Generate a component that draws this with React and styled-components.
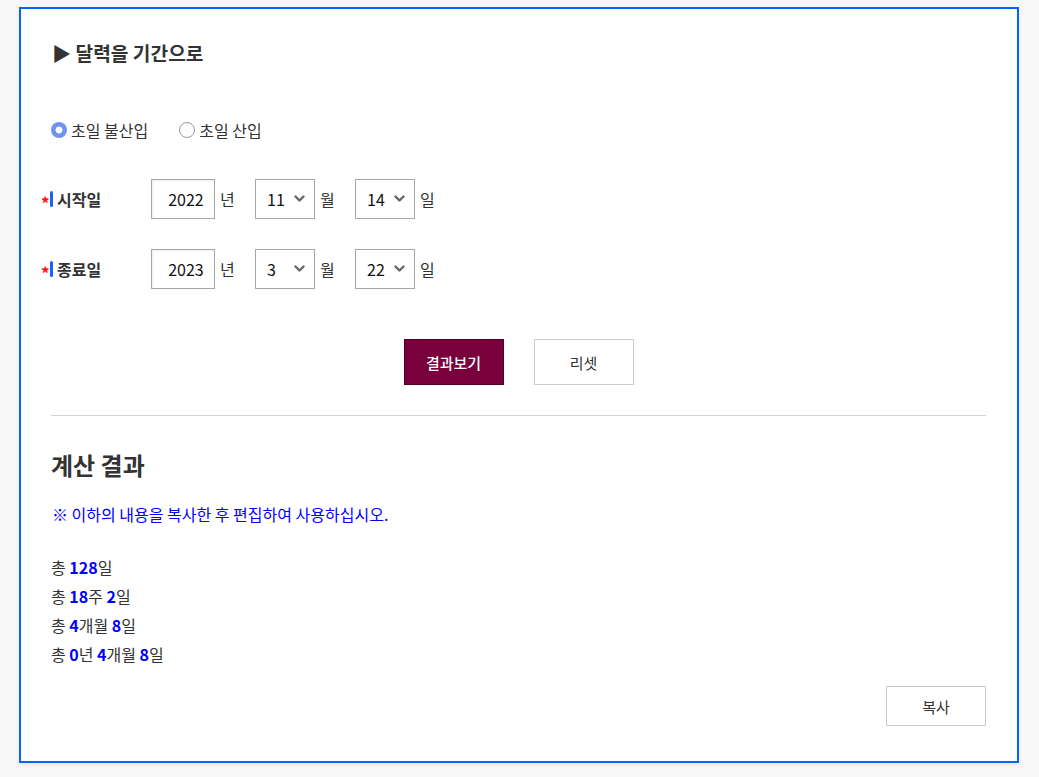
import React, { useState } from "react";
import styled, { createGlobalStyle } from "styled-components";

const Global = createGlobalStyle`
  html, body { margin: 0; padding: 0; background: #f8f8f8; }
  body { font-family: "Noto Sans CJK KR", "Noto Sans", sans-serif; color: #333; }
  * { box-sizing: border-box; }
`;

const Page = styled.div`
  padding: 7px 20px 14px 19px;
`;

const Box = styled.div`
  width: 1000px;
  height: 756px;
  border: 2px solid #0066ff;
  background: #fff;
  box-shadow: 0 2px 4px rgba(0,0,0,0.08);
  padding: 0 31px 0 30px;
  display: flex;
  flex-direction: column;
`;

const Title = styled.h2`
  margin: 31px 0 0 1px;
  font-size: 19.2px;
  line-height: 26px;
  font-weight: 700;
  color: #333;
`;

const RadioRow = styled.div`
  margin-top: 54px;
  height: 20px;
  display: flex;
  align-items: center;
  gap: 31px;
`;

const RadioLabel = styled.label`
  display: flex;
  align-items: center;
  gap: 4px;
  font-size: 16px;
  line-height: 20px;
  cursor: pointer;
`;

const RadioInput = styled.input`
  appearance: none;
  margin: 0;
  width: 16px;
  height: 16px;
  border-radius: 50%;
  border: 1px solid #9a9a9a;
  background: #fff;
  &:checked {
    border: none;
    background: radial-gradient(circle, #fff 0 3.2px, #6f94f0 3.8px);
  }
`;

const DateRow = styled.div`
  margin-top: ${(p) => p.$top}px;
  margin-left: -10px;
  height: 40px;
  display: flex;
  align-items: center;
`;

const FieldLabel = styled.div`
  width: 110px;
  display: flex;
  align-items: center;
  font-size: 16px;
  font-weight: 700;
  color: #333;
`;

const Star = styled.span`
  color: #ff1010;
  font-size: 17px;
  font-weight: 700;
  width: 9px;
  line-height: 1;
  padding-top: 6px;
`;

const Bar = styled.span`
  display: inline-block;
  width: 3px;
  height: 16px;
  border-radius: 2px;
  background: #1a63f0;
  margin-right: 4px;
`;

const YearInput = styled.input`
  width: 64px;
  height: 40px;
  border: 1px solid #a6a6a6;
  box-shadow: inset 1px 1px 2px rgba(0,0,0,0.08);
  font-family: inherit;
  font-size: 16px;
  color: #111;
  text-align: center;
  padding: 0 0 0 6px;
  outline: none;
`;

const Unit = styled.span`
  flex: none;
  width: 16px;
  font-size: 16px;
  color: #333;
  margin: 0 ${(p) => (p.$last ? 0 : 19)}px 0 5px;
`;

const SelectWrap = styled.div`
  position: relative;
  flex: none;
  width: 60px;
  height: 40px;
`;

const Select = styled.select`
  appearance: none;
  width: 60px;
  height: 40px;
  border: 1px solid #a6a6a6;
  background: #fff;
  font-family: inherit;
  font-size: 16px;
  color: #111;
  padding: 0 0 0 11px;
  outline: none;
`;

const Chevron = styled.svg`
  position: absolute;
  right: 10px;
  top: 16px;
  pointer-events: none;
`;

const ButtonRow = styled.div`
  margin-top: 50px;
  display: flex;
  justify-content: center;
  gap: 30px;
`;

const Button = styled.button`
  width: 100px;
  height: ${(p) => (p.$h ? p.$h : 46)}px;
  font-family: inherit;
  font-size: 15px;
  cursor: pointer;
  border: 1px solid ${(p) => (p.$primary ? "#55002a" : "#cccccc")};
  background: ${(p) => (p.$primary ? "#7a003c" : "#fff")};
  color: ${(p) => (p.$primary ? "#fff" : "#333")};
  font-weight: ${(p) => (p.$primary ? 500 : 400)};
`;

const Divider = styled.hr`
  margin: 30px 0 0;
  border: none;
  border-top: 1px solid #d4d4d4;
`;

const ResultTitle = styled.h3`
  margin: 34px 0 0;
  font-size: 24px;
  line-height: 30px;
  font-weight: 700;
  color: #333;
`;

const Note = styled.p`
  margin: 23px 0 0 1px;
  font-size: 16px;
  line-height: 22px;
  color: #0000ff;
`;

const ResultList = styled.div`
  margin-top: 28px;
  display: flex;
  flex-direction: column;
`;

const ResultLine = styled.div`
  font-size: 16px;
  line-height: 29px;
  color: #333;
`;

const Num = styled.b`
  color: #0000ff;
  font-weight: 700;
`;

const CopyRow = styled.div`
  margin-top: 17px;
  display: flex;
  justify-content: flex-end;
`;

const ChevronIcon = () => (
  <Chevron width="11" height="8" viewBox="0 0 11 8">
    <path d="M1.5 1.5 L5.5 5.5 L9.5 1.5" fill="none" stroke="#666" strokeWidth="2.4" strokeLinecap="round" strokeLinejoin="round" />
  </Chevron>
);

const months = Array.from({ length: 12 }, (_, i) => i + 1);
const days = Array.from({ length: 31 }, (_, i) => i + 1);

const DateField = ({ label, year, month, day, top }) => (
  <DateRow $top={top}>
    <FieldLabel>
      <Star>*</Star>
      <Bar />
      {label}
    </FieldLabel>
    <YearInput defaultValue={year} />
    <Unit>년</Unit>
    <SelectWrap>
      <Select defaultValue={month}>
        {months.map((m) => (
          <option key={m} value={m}>{m}</option>
        ))}
      </Select>
      <ChevronIcon />
    </SelectWrap>
    <Unit>월</Unit>
    <SelectWrap>
      <Select defaultValue={day}>
        {days.map((d) => (
          <option key={d} value={d}>{d}</option>
        ))}
      </Select>
      <ChevronIcon />
    </SelectWrap>
    <Unit $last>일</Unit>
  </DateRow>
);

export default function App() {
  const [mode, setMode] = useState("exclude");
  return (
    <Page>
      <Global />
      <Box>
        <Title>▶ 달력을 기간으로</Title>
        <RadioRow>
          <RadioLabel>
            <RadioInput type="radio" name="mode" checked={mode === "exclude"} onChange={() => setMode("exclude")} />
            초일 불산입
          </RadioLabel>
          <RadioLabel>
            <RadioInput type="radio" name="mode" checked={mode === "include"} onChange={() => setMode("include")} />
            초일 산입
          </RadioLabel>
        </RadioRow>
        <DateField label="시작일" year="2022" month={11} day={14} top={39} />
        <DateField label="종료일" year="2023" month={3} day={22} top={30} />
        <ButtonRow>
          <Button $primary>결과보기</Button>
          <Button>리셋</Button>
        </ButtonRow>
        <Divider />
        <ResultTitle>계산 결과</ResultTitle>
        <Note>※ 이하의 내용을 복사한 후 편집하여 사용하십시오.</Note>
        <ResultList>
          <ResultLine>총 <Num>128</Num>일</ResultLine>
          <ResultLine>총 <Num>18</Num>주 <Num>2</Num>일</ResultLine>
          <ResultLine>총 <Num>4</Num>개월 <Num>8</Num>일</ResultLine>
          <ResultLine>총 <Num>0</Num>년 <Num>4</Num>개월 <Num>8</Num>일</ResultLine>
        </ResultList>
        <CopyRow>
          <Button $h={40}>복사</Button>
        </CopyRow>
      </Box>
    </Page>
  );
}
